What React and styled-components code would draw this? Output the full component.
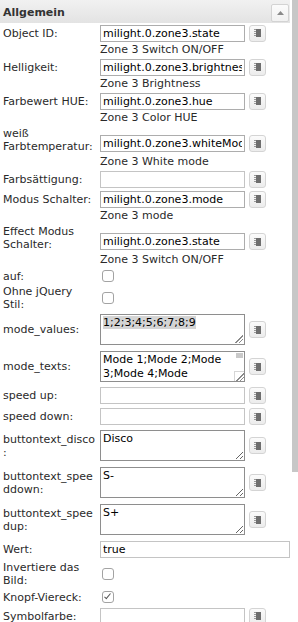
import React from "react";
import styled, { createGlobalStyle, css } from "styled-components";

const GlobalStyle = createGlobalStyle`
  html, body { margin: 0; padding: 0; background: #fff; overflow: hidden; }
  body { font-family: "DejaVu Sans", Verdana, sans-serif; font-size: 11px; color: #2a2a2a; }
`;

const gripLines = css`
  background: linear-gradient(
    135deg,
    transparent 0 50%,
    #8a8a8a 50% 58%,
    transparent 58% 72%,
    #8a8a8a 72% 80%,
    transparent 80%
  );
`;

const Panel = styled.div`
  width: 290px;
`;

const GroupHeader = styled.div`
  display: flex;
  align-items: center;
  justify-content: space-between;
  height: 23px;
  box-sizing: border-box;
  padding: 2px 1px 0 3px;
  background: linear-gradient(#f1f1f1, #e3e3e3);
  font-weight: bold;
  color: #333;
  line-height: 14px;
`;

const ToggleButton = styled.button`
  width: 18px;
  height: 18px;
  padding: 0;
  box-sizing: border-box;
  border: 1px solid #d3d3d3;
  border-radius: 2px;
  background: linear-gradient(#fbfbfb, #f1f1f1);
  display: flex;
  align-items: center;
  justify-content: center;
`;

const Row = styled.div`
  display: grid;
  grid-template-columns: 93px 1fr;
  column-gap: 4px;
  padding-left: 3px;
  height: ${(p) => p.$h}px;
  align-items: center;
`;

const Label = styled.div`
  line-height: 13px;
  overflow-wrap: anywhere;
`;

const Control = styled.div`
  display: flex;
  align-items: center;
  gap: 4px;
  align-self: ${(p) => (p.$end ? "end" : "center")};
  padding-bottom: ${(p) => (p.$end ? "3px" : "0")};
`;

const TextInput = styled.input`
  width: ${(p) => (p.$wide ? 190 : 145)}px;
  height: 17px;
  box-sizing: border-box;
  margin: 0;
  padding: 0 2px;
  border: 1px solid ${(p) => (p.$light ? "#c4c4c4" : "#adadad")};
  border-radius: 0;
  font: 11px "DejaVu Sans", Verdana, sans-serif;
  color: #000;
  background: #fff;
  outline: none;
`;

const AreaWrap = styled.div`
  position: relative;
  flex: none;
`;

const TextArea = styled.textarea`
  display: block;
  width: 145px;
  height: 31px;
  box-sizing: border-box;
  margin: 0;
  padding: 1px ${(p) => (p.$scroll ? "15px" : "2px")} 1px 2px;
  border: 1px solid #8e8e8e;
  border-radius: 0;
  font: 11px/14px "DejaVu Sans", Verdana, sans-serif;
  color: #000;
  background: #fff;
  outline: none;
  resize: both;
  overflow: hidden;
`;

const AreaThumb = styled.div`
  position: absolute;
  top: 2px;
  right: 2px;
  width: 7px;
  height: 5px;
  background: #c9c9c9;
`;

const AreaCorner = styled.div`
  position: absolute;
  right: 1px;
  bottom: 1px;
  width: 10px;
  height: 10px;
  box-sizing: border-box;
  border-top: 1px solid #d6d6d6;
  border-left: 1px solid #d6d6d6;
  background: #fff;
  &::after {
    content: "";
    position: absolute;
    right: 0;
    bottom: 0;
    width: 8px;
    height: 8px;
    ${gripLines}
  }
`;

const SelectedArea = styled.div`
  position: relative;
  width: 145px;
  height: 31px;
  box-sizing: border-box;
  padding: 1px 2px;
  border: 1px solid #8e8e8e;
  line-height: 14px;
  color: #000;
  &::after {
    content: "";
    position: absolute;
    right: 1px;
    bottom: 1px;
    width: 8px;
    height: 8px;
    ${gripLines}
  }
`;

const Highlight = styled.span`
  background: #d4d4d4;
`;

const Check = styled.input.attrs({ type: "checkbox" })`
  appearance: none;
  -webkit-appearance: none;
  position: relative;
  margin: 0 0 0 2px;
  width: 12px;
  height: 12px;
  box-sizing: border-box;
  border: 1px solid #a3a3a3;
  border-radius: 3px;
  background: #fff;
  &:checked::after {
    content: "";
    position: absolute;
    left: 3px;
    top: 0px;
    width: 3px;
    height: 7px;
    box-sizing: border-box;
    border: solid #555;
    border-width: 0 1.5px 1.5px 0;
    transform: rotate(40deg);
  }
`;

const PickButton = styled.button`
  flex: none;
  width: 17px;
  height: 17px;
  padding: 0;
  box-sizing: border-box;
  border: 1px solid #d4d4d4;
  border-radius: 3px;
  background: linear-gradient(#fbfbfb, #ececec);
  display: flex;
  align-items: center;
  justify-content: center;
`;

const Desc = styled.div`
  height: 14px;
  line-height: 14px;
  padding-left: 100px;
  white-space: nowrap;
`;

const ScrollThumb = styled.div`
  position: fixed;
  top: 0;
  right: 0;
  width: 6px;
  height: 472px;
  background: #c7c7c7;
`;

const PickIcon = () => (
  <svg width="7" height="8" viewBox="0 0 7 8">
    <rect x="2" y="0" width="5" height="8" fill="#6e6e6e" />
    <rect x="0" y="0" width="2" height="1" fill="#9a9a9a" />
    <rect x="0" y="2" width="2" height="1" fill="#9a9a9a" />
    <rect x="0" y="4" width="2" height="1" fill="#9a9a9a" />
    <rect x="0" y="6" width="2" height="1" fill="#9a9a9a" />
  </svg>
);

const TriangleUp = () => (
  <svg width="7" height="4" viewBox="0 0 7 4">
    <polygon points="3.5,0 7,4 0,4" fill="#8a8a8a" />
  </svg>
);

const Pick = () => (
  <PickButton type="button">
    <PickIcon />
  </PickButton>
);

const rows = [
  { kind: "input", label: "Object ID:", value: "milight.0.zone3.state", desc: "Zone 3 Switch ON/OFF" },
  { kind: "input", label: "Helligkeit:", value: "milight.0.zone3.brightness", desc: "Zone 3 Brightness" },
  { kind: "input", label: "Farbewert HUE:", value: "milight.0.zone3.hue", desc: "Zone 3 Color HUE" },
  { kind: "input", label: "weiß Farbtemperatur:", value: "milight.0.zone3.whiteMode", desc: "Zone 3 White mode", h: 30, end: true },
  { kind: "input", label: "Farbsättigung:", value: "", light: true },
  { kind: "input", label: "Modus Schalter:", value: "milight.0.zone3.mode", desc: "Zone 3 mode" },
  { kind: "input", label: "Effect Modus Schalter:", value: "milight.0.zone3.state", desc: "Zone 3 Switch ON/OFF", h: 30, end: true },
  { kind: "check", label: "auf:", h: 18 },
  { kind: "check", label: "Ohne jQuery Stil:", h: 26 },
  { kind: "selected", label: "mode_values:", value: "1;2;3;4;5;6;7;8;9", h: 37 },
  { kind: "area", label: "mode_texts:", value: "Mode 1;Mode 2;Mode 3;Mode 4;Mode 5;Mode 6;Mode 7;Mode 8;Mode 9", scroll: true, h: 37 },
  { kind: "input", label: "speed up:", value: "", light: true, h: 21 },
  { kind: "input", label: "speed down:", value: "", light: true, h: 21 },
  { kind: "area", label: "buttontext_disco:", value: "Disco", h: 37 },
  { kind: "area", label: "buttontext_speeddown:", value: "S-", h: 37 },
  { kind: "area", label: "buttontext_speedup:", value: "S+", h: 37 },
  { kind: "input", label: "Wert:", value: "true", wide: true, light: true, noPick: true, h: 22 },
  { kind: "check", label: "Invertiere das Bild:", h: 28 },
  { kind: "check", label: "Knopf-Viereck:", checked: true, h: 18 },
  { kind: "input", label: "Symbolfarbe:", value: "", light: true },
];

function Field({ row }) {
  if (row.kind === "check") {
    return (
      <Control>
        <Check defaultChecked={!!row.checked} />
      </Control>
    );
  }
  if (row.kind === "selected") {
    return (
      <Control>
        <SelectedArea role="textbox" aria-multiline="true">
          <Highlight>{row.value}</Highlight>
        </SelectedArea>
        <Pick />
      </Control>
    );
  }
  if (row.kind === "area") {
    return (
      <Control>
        <AreaWrap>
          <TextArea defaultValue={row.value} $scroll={row.scroll} />
          {row.scroll && <AreaThumb />}
          {row.scroll && <AreaCorner />}
        </AreaWrap>
        <Pick />
      </Control>
    );
  }
  return (
    <Control $end={row.end}>
      <TextInput type="text" defaultValue={row.value} $wide={row.wide} $light={row.light} />
      {!row.noPick && <Pick />}
    </Control>
  );
}

export default function App() {
  return (
    <>
      <GlobalStyle />
      <Panel>
        <GroupHeader>
          <span>Allgemein</span>
          <ToggleButton type="button" aria-label="collapse">
            <TriangleUp />
          </ToggleButton>
        </GroupHeader>
        {rows.map((row, i) => (
          <React.Fragment key={i}>
            <Row $h={row.h || 20}>
              <Label>{row.label}</Label>
              <Field row={row} />
            </Row>
            {row.desc && <Desc>{row.desc}</Desc>}
          </React.Fragment>
        ))}
      </Panel>
      <ScrollThumb />
    </>
  );
}
